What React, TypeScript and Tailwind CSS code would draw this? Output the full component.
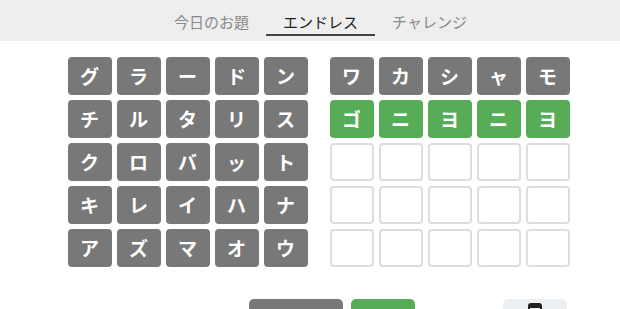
import React from "react";

const keyboard = [
  ["グ", "ラ", "ー", "ド", "ン"],
  ["チ", "ル", "タ", "リ", "ス"],
  ["ク", "ロ", "バ", "ッ", "ト"],
  ["キ", "レ", "イ", "ハ", "ナ"],
  ["ア", "ズ", "マ", "オ", "ウ"],
];

type Cell = { ch: string; state: "used" | "hit" | "empty" };

const board: Cell[][] = [
  ["ワ", "カ", "シ", "ャ", "モ"].map((ch) => ({ ch, state: "used" as const })),
  ["ゴ", "ニ", "ヨ", "ニ", "ヨ"].map((ch) => ({ ch, state: "hit" as const })),
  ...Array.from({ length: 3 }, () => Array.from({ length: 5 }, () => ({ ch: "", state: "empty" as const }))),
];

const tabs = ["今日のお題", "エンドレス", "チャレンジ"];

export default function App() {
  return (
    <div
      className="min-h-screen bg-white"
      style={{ fontFamily: '"Noto Sans CJK JP", "Noto Sans", sans-serif' }}
    >
      <header className="h-[41px] bg-[#eeeeee] flex justify-center pl-[21px]">
        {tabs.map((t, i) => (
          <button
            key={t}
            className={`w-[109px] h-[36px] pt-[9px] text-[15px] leading-[20px] border-b-2 ${
              i === 1 ? "border-[#444444] text-[#222222]" : "border-transparent text-[#8a8a8a]"
            }`}
          >
            {t}
          </button>
        ))}
      </header>

      <main className="flex justify-center gap-[22px] pt-[16px] pl-[17px]">
        <div className="grid grid-cols-5 gap-[5px]">
          {keyboard.flat().map((k, i) => (
            <button
              key={i}
              className="w-[44px] h-[38px] rounded-[4px] bg-[#787878] text-white text-[19px] font-bold flex items-center justify-center"
            >
              {k}
            </button>
          ))}
        </div>
        <div className="grid grid-cols-5 gap-[5px]">
          {board.flat().map((c, i) => (
            <div
              key={i}
              className={`w-[44px] h-[38px] rounded-[4px] text-white text-[19px] font-bold flex items-center justify-center ${
                c.state === "used"
                  ? "bg-[#787878]"
                  : c.state === "hit"
                  ? "bg-[#57ad57]"
                  : "bg-white border-2 border-[#dddddd]"
              }`}
            >
              {c.ch}
            </div>
          ))}
        </div>
      </main>

      {/* action row: only the top edge is in view */}
      <div className="flex pt-[32px] pl-[249px]">
        <button aria-label="消す" className="w-[94px] h-[40px] rounded-[5px] bg-[#787878]" />
        <button aria-label="決定" className="w-[64px] h-[40px] ml-[8px] rounded-[5px] bg-[#57ad57]" />
        <button aria-label="共有" className="w-[64px] h-[40px] ml-[88px] rounded-[5px] bg-[#eceff1] flex justify-center pt-[4px]">
          <svg width="14" height="16" viewBox="0 0 14 16">
            <rect x="1" y="1" width="12" height="14" rx="2" fill="none" stroke="#222" strokeWidth="2" />
            <rect x="1" y="1" width="12" height="4" fill="#222" />
          </svg>
        </button>
      </div>
    </div>
  );
}
